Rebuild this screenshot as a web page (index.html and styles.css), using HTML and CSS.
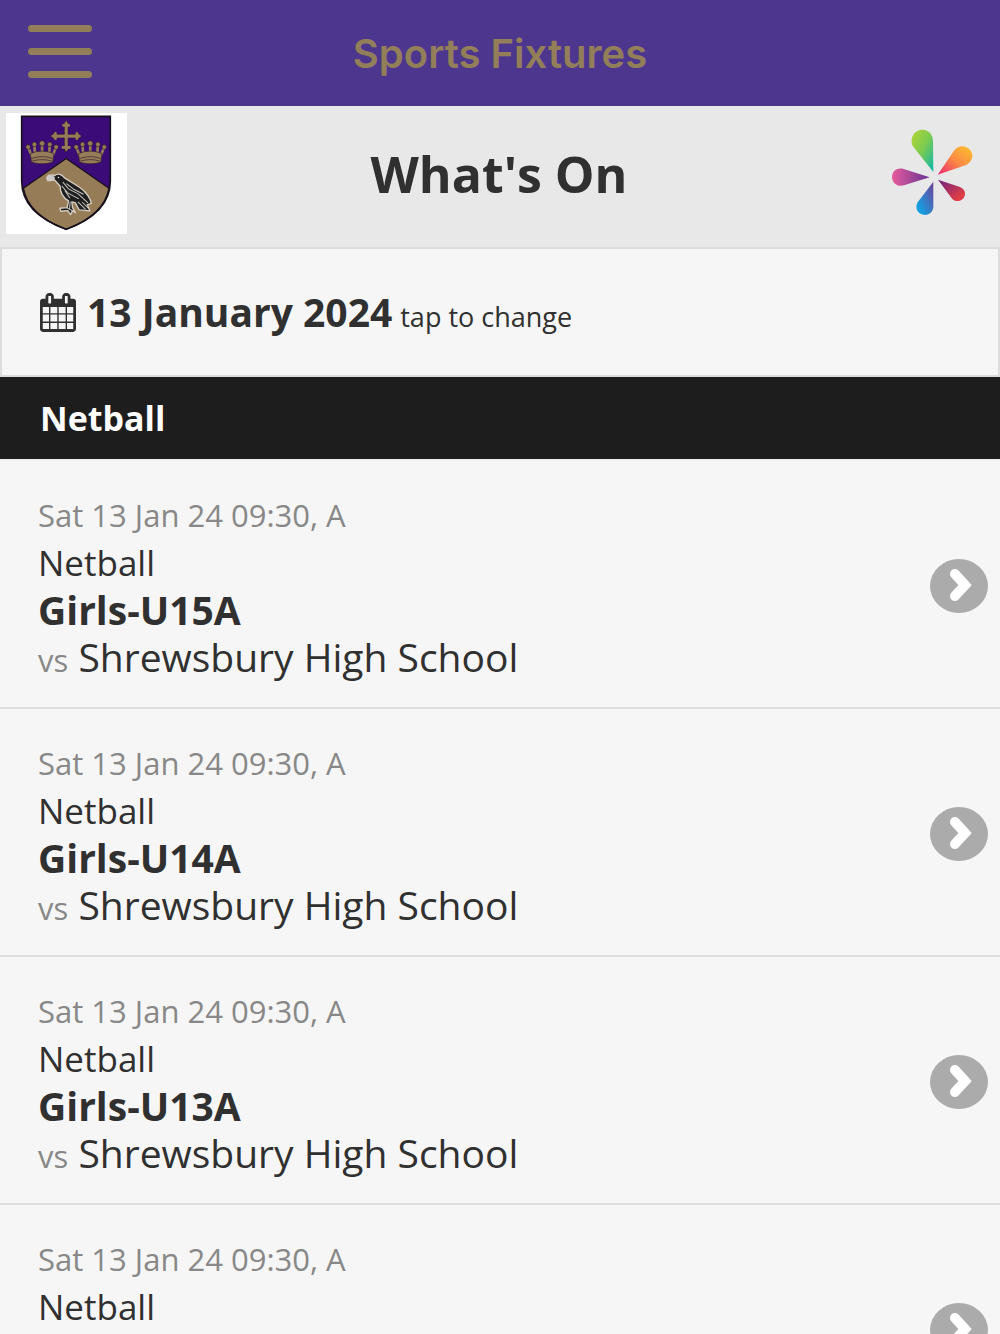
FILE: index.html
```
<!DOCTYPE html>
<html lang="en">
<head>
    <meta charset="UTF-8">
    <meta name="viewport" content="width=device-width, initial-scale=1.0">
    <title>Sports Fixtures</title>
    <link rel="stylesheet" href="styles.css">
</head>
<body>

    <header class="topbar">
        <button class="menu" type="button" aria-label="Menu">
            <span class="menu-line"></span>
            <span class="menu-line"></span>
            <span class="menu-line"></span>
        </button>
        <div class="topbar-title">Sports Fixtures</div>
    </header>

    <div class="heading">
        <svg class="crest" viewBox="20 41 362 362" aria-hidden="true">
            <defs>
                <g id="crown">
                    <path d="M98 172L86 143M107 168L105 136M128 166V133M149 168L151 136M158 172L170 143" stroke="#977d57" stroke-width="8"/>
                    <path d="M93 162Q128 148 163 162L160 188Q128 198 96 188Z"/>
                    <circle cx="86" cy="143" r="7"/>
                    <circle cx="105" cy="135" r="7"/>
                    <circle cx="128" cy="132" r="8"/>
                    <circle cx="151" cy="135" r="7"/>
                    <circle cx="170" cy="143" r="7"/>
                    <path d="M97 177Q128 166 159 177M98 185Q128 176 158 185" fill="none"/>
                </g>
            </defs>
            <rect x="20" y="41" width="362" height="362" fill="#fff"/>
            <path d="M67 51H332V245C332 315 278 360 200 389C122 360 67 315 67 245Z" fill="#3b0b78"/>
            <path d="M200 177L328 266C318 324 267 364 200 389C133 364 82 324 72 266Z" fill="#977d57" stroke="#17101c" stroke-width="4"/>
            <path d="M67 51H332V245C332 315 278 360 200 389C122 360 67 315 67 245Z" fill="none" stroke="#17101c" stroke-width="5"/>
            <path d="M195 157V115H170V123L153 110L170 97V105H195V81H188L200 63L212 81H205V105H230V97L246 110L230 123V115H205V143H212L200 158L188 143H195Z" fill="#977d57" stroke="#2b1a2c" stroke-width="2"/>
            <path d="M192 78H208M168 102V118M232 102V118M190 144H210M200 75V148M165 110H235" stroke="#977d57" stroke-width="8" stroke-linecap="round"/>
            <g fill="#977d57" stroke="#2b1a2c" stroke-width="2">
                <use href="#crown"/>
                <use href="#crown" x="144"/>
            </g>
            <!-- raven -->
            <path d="M143 239C140 228 153 224 166 228C174 220 188 224 195 235L240 263C260 277 274 298 275 312L263 315L271 334L239 331L227 309L217 307L219 324L228 339L219 334L213 345L205 333L184 335L181 326L203 324L207 304C190 294 181 276 182 260L166 242L145 244Z" fill="#201f20" stroke="#d6cec2" stroke-width="4" stroke-linejoin="round"/>
            <ellipse cx="154" cy="236" rx="12" ry="8" fill="#ccc9c6"/>
            <path d="M190 248L207 268L236 283L265 310M187 260L206 281L238 298M201 252L224 270L252 284M196 273L211 295M235 307L258 329M248 308L267 326M212 306L210 328M201 324L220 334" fill="none" stroke="#c4c1bd" stroke-width="3"/>
            <circle cx="177" cy="234" r="2" fill="#fff"/>
        </svg>
        <h1 class="heading-title">What's On</h1>
        <svg class="burst" viewBox="30 40 246 264" aria-hidden="true">
            <defs>
                <linearGradient id="green" x1="0" y1="0" x2="1" y2="1"><stop offset="0" stop-color="#b5d437"/><stop offset=".5" stop-color="#7bcb50"/><stop offset="1" stop-color="#08b7b0"/></linearGradient>
                <linearGradient id="orange" x1="1" y1="0" x2="0" y2="1"><stop offset="0" stop-color="#fcc42d"/><stop offset=".5" stop-color="#fa8a45"/><stop offset="1" stop-color="#ef2474"/></linearGradient>
                <linearGradient id="red" x1="0" y1="0" x2="1" y2="1"><stop offset="0" stop-color="#6b2382"/><stop offset=".8" stop-color="#df3d46"/></linearGradient>
                <linearGradient id="blue" x1="1" y1="0" x2="0" y2="1"><stop offset="0" stop-color="#733f98"/><stop offset=".8" stop-color="#149ee0"/></linearGradient>
                <linearGradient id="pink"><stop offset="0" stop-color="#e75c9d"/><stop offset="1" stop-color="#663193"/></linearGradient>
            </defs>
            <path d="M157 172L98 98C83 75 98 45 124 45C144 45 156 60 156 79Z" fill="url(#green)"/>
            <path d="M170 180L220 107C232 91 254 92 267 105C281 120 273 143 255 151Z" fill="url(#orange)"/>
            <path d="M171 195L235 216C253 222 257 240 246 252C235 263 219 261 211 249Z" fill="url(#red)"/>
            <path d="M157 201V275C157 291 146 301 132 301C111 301 100 281 110 263Z" fill="url(#blue)"/>
            <path d="M146 188L69 212C49 218 33 205 33 187C33 169 49 158 68 163Z" fill="url(#pink)"/>
        </svg>
    </div>

    <button class="date" type="button">
        <svg class="calendar" viewBox="64 0 1664 1792" aria-hidden="true">
            <path d="M192 1664h288v-288h-288v288zm352 0h320v-288h-320v288zm-352-352h288v-320h-288v320zm352 0h320v-320h-320v320zm-352-384h288v-288h-288v288zm736 736h320v-288h-320v288zm-384-736h320v-288h-320v288zm768 736h288v-288h-288v288zm-384-352h320v-320h-320v320zm-352-864v-288q0-13-9.500-22.500t-22.500-9.500h-64q-13 0-22.500 9.500t-9.500 22.500v288q0 13 9.500 22.500t22.500 9.500h64q13 0 22.500-9.500t9.500-22.500zm736 864h288v-320h-288v320zm-384-384h320v-288h-320v288zm384 0h288v-288h-288v288zm32-480v-288q0-13-9.500-22.500t-22.500-9.500h-64q-13 0-22.500 9.500t-9.500 22.500v288q0 13 9.500 22.500t22.500 9.500h64q13 0 22.500-9.500t9.500-22.500zm384-64v1280q0 52-38 90t-90 38h-1408q-52 0-90-38t-38-90v-1280q0-52 38-90t90-38h128v-96q0-66 47-113t113-47h64q66 0 113 47t47 113v96h384v-96q0-66 47-113t113-47h64q66 0 113 47t47 113v96h128q52 0 90 38t38 90z"/>
        </svg>
        <span class="date-value">13 January 2024</span>
        <span class="date-hint">tap to change</span>
    </button>

    <h2 class="sport">Netball</h2>

    <ul class="fixtures">
        <li>
            <a class="fixture" href="#">
                <span class="details">
                    <span class="when">Sat 13 Jan 24 09:30, A</span>
                    <span class="game">Netball</span>
                    <strong class="team">Girls-U15A</strong>
                    <span class="opponent"><span class="vs">vs</span> Shrewsbury High School</span>
                </span>
                <svg class="arrow" viewBox="0 0 58 54" aria-hidden="true">
                    <ellipse cx="29" cy="27" rx="29" ry="27"/>
                    <path d="M25 15L35 26L25 37"/>
                </svg>
            </a>
        </li>
        <li>
            <a class="fixture" href="#">
                <span class="details">
                    <span class="when">Sat 13 Jan 24 09:30, A</span>
                    <span class="game">Netball</span>
                    <strong class="team">Girls-U14A</strong>
                    <span class="opponent"><span class="vs">vs</span> Shrewsbury High School</span>
                </span>
                <svg class="arrow" viewBox="0 0 58 54" aria-hidden="true">
                    <ellipse cx="29" cy="27" rx="29" ry="27"/>
                    <path d="M25 15L35 26L25 37"/>
                </svg>
            </a>
        </li>
        <li>
            <a class="fixture" href="#">
                <span class="details">
                    <span class="when">Sat 13 Jan 24 09:30, A</span>
                    <span class="game">Netball</span>
                    <strong class="team">Girls-U13A</strong>
                    <span class="opponent"><span class="vs">vs</span> Shrewsbury High School</span>
                </span>
                <svg class="arrow" viewBox="0 0 58 54" aria-hidden="true">
                    <ellipse cx="29" cy="27" rx="29" ry="27"/>
                    <path d="M25 15L35 26L25 37"/>
                </svg>
            </a>
        </li>
        <li>
            <a class="fixture" href="#">
                <span class="details">
                    <span class="when">Sat 13 Jan 24 09:30, A</span>
                    <span class="game">Netball</span>
                    <strong class="team">Girls-U12A</strong>
                    <span class="opponent"><span class="vs">vs</span> Shrewsbury High School</span>
                </span>
                <svg class="arrow" viewBox="0 0 58 54" aria-hidden="true">
                    <ellipse cx="29" cy="27" rx="29" ry="27"/>
                    <path d="M25 15L35 26L25 37"/>
                </svg>
            </a>
        </li>
    </ul>

</body>
</html>
```

FILE: styles.css
```
* {
    box-sizing: border-box;
}
html {
    scrollbar-width: none;
}
body {
    margin: 0;
    font-family: "Open Sans", "Noto Sans", sans-serif;
    color: #303030;
    background-color: #f6f6f6;
}
.topbar {
    display: grid;
    grid-template-columns: 64px 1fr 64px;
    align-items: center;
    height: 106px;
    padding: 0 28px;
    background-color: #4d378e;
}
.menu {
    display: flex;
    flex-direction: column;
    gap: 16px;
    padding: 0 0 4px;
    border: 0;
    background: none;
    cursor: pointer;
}
.menu-line {
    width: 64px;
    height: 7px;
    border-radius: 4px;
    background-color: #937e5a;
}
.topbar-title {
    font-family: Inter, sans-serif;
    font-size: 40px;
    font-weight: 600;
    text-align: center;
    color: #937e5a;
}
.heading {
    display: grid;
    grid-template-columns: 121px 1fr 121px;
    align-items: center;
    padding: 7px 8px 13px 6px;
    border-bottom: 2px solid #dddddd;
    background-color: #e8e8e8;
}
.crest {
    display: block;
    width: 121px;
    height: 121px;
}
.heading-title {
    margin: 0;
    font-size: 50px;
    line-height: 70px;
    text-align: center;
}
.burst {
    width: 82px;
    height: 88px;
    margin-bottom: 4px;
    justify-self: center;
}
.date {
    display: flex;
    align-items: baseline;
    width: 100%;
    height: 128px;
    padding: 36px 38px;
    border: 2px solid #dddddd;
    border-top: 0;
    background-color: #f6f6f6;
    font-family: inherit;
    color: #303030;
    cursor: pointer;
}
.calendar {
    width: 36px;
    height: 39px;
    margin-right: 11px;
    align-self: center;
    fill: #303030;
}
.date-value {
    margin-right: 8px;
    font-size: 39px;
    line-height: 54px;
    font-weight: bold;
}
.date-hint {
    font-size: 27px;
}
.sport {
    margin: 0;
    padding: 17px 40px;
    font-size: 34px;
    line-height: 48px;
    color: #fff;
    background-color: #1d1d1d;
}
.fixtures {
    margin: 0;
    padding: 0;
    border-top: 2px solid #eeeeee;
    list-style: none;
}
.fixture {
    display: flex;
    align-items: center;
    justify-content: space-between;
    padding: 31px 12px 27px 38px;
    border-bottom: 2px solid #dddddd;
    color: #303030;
    text-decoration: none;
}
.details > * {
    display: block;
    line-height: 47px;
}
.when {
    font-size: 31px;
    color: #888888;
}
.game {
    font-size: 35px;
}
.team,
.opponent {
    font-size: 39px;
}
.vs {
    font-size: 31px;
    line-height: 1;
    color: #888888;
}
.arrow {
    width: 58px;
    height: 54px;
}
.arrow ellipse {
    fill: #ababab;
}
.arrow path {
    fill: none;
    stroke: #fff;
    stroke-width: 10;
    stroke-linecap: round;
}
```
